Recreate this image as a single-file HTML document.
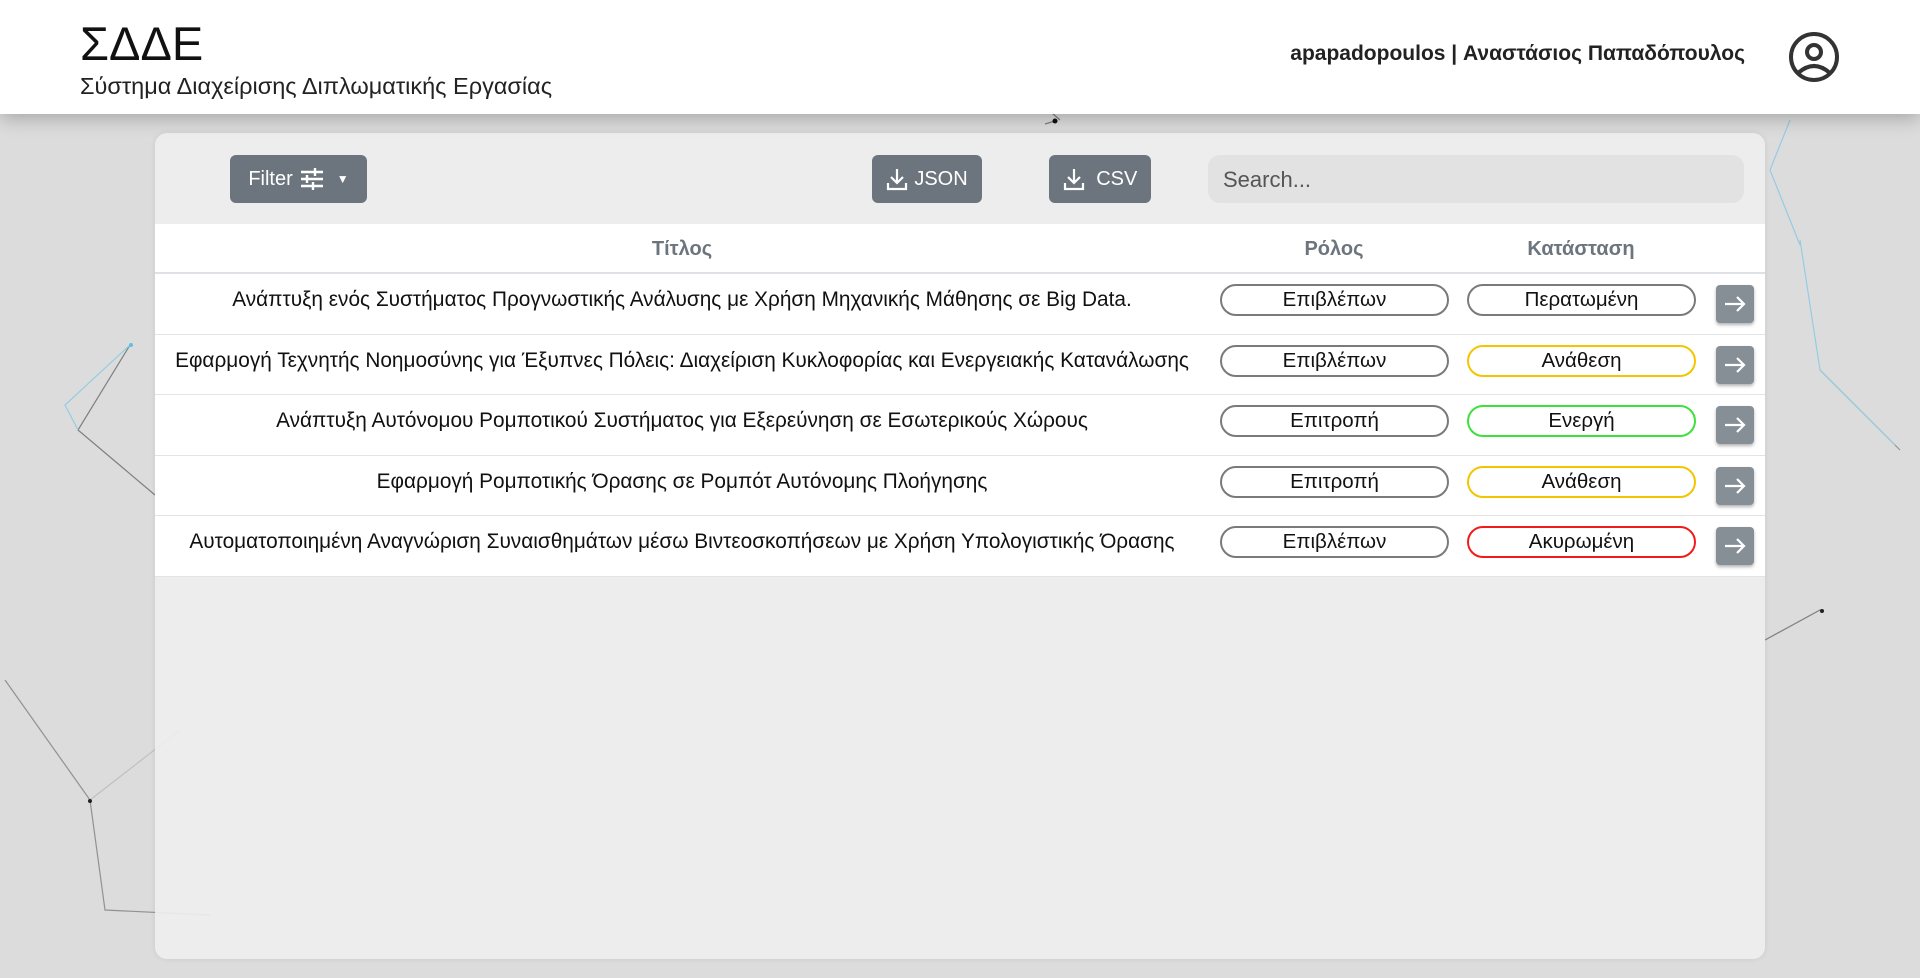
<!DOCTYPE html>
<html><head><meta charset="utf-8">
<style>
*{margin:0;padding:0;box-sizing:border-box}
body{width:1920px;height:978px;overflow:hidden;background:#dcdcdc;font-family:"Liberation Sans","DejaVu Sans",sans-serif;position:relative;color:#111}
.bg{position:absolute;left:0;top:0}
header{position:absolute;left:0;top:0;width:1920px;height:114px;background:#fff;box-shadow:0 4px 18px rgba(0,0,0,.25);z-index:5}
.logo{position:absolute;left:80px;top:16px;font-size:47px;color:#111}
.sub{position:absolute;left:80px;top:73px;font-size:23.5px;color:#222}
.user{position:absolute;right:175px;top:42px;font-size:21px;font-weight:bold;color:#222}
.card{position:absolute;left:155px;top:133px;width:1610px;height:826px;background:rgba(238,238,238,.92);border-radius:12px;overflow:hidden;box-shadow:0 0 6px rgba(0,0,0,.08)}
.btn{position:absolute;top:22px;height:48px;background:#6c757d;border-radius:6px;color:#fff;font-size:20px;display:flex;align-items:center;justify-content:center;gap:6px}
.search{position:absolute;left:1053px;top:22px;width:536px;height:48px;border-radius:12px;background:#e2e2e2;font-size:22px;color:#555;padding:12px 15px}
.table{position:absolute;left:0;top:91px;width:1610px;background:#fff}
.th{height:50px;position:relative;border-bottom:2px solid #dee2e6;font-weight:bold;color:#6c757d;font-size:20px}
.th span{position:absolute;top:14px;transform:translateX(-50%)}
.row{height:60.5px;position:relative;border-bottom:1.5px solid #e4e4e4;font-size:20.8px}
.row .t{position:absolute;left:527px;top:14px;transform:translateX(-50%);white-space:nowrap;color:#111}
.pill{position:absolute;top:10px;height:32px;width:229px;border:2px solid #7a7a7a;border-radius:16px;text-align:center;line-height:28px;font-size:20.5px;color:#111}
.r{left:1065px}.s{left:1312px}
.y{border-color:#f5c400}.g{border-color:#3ee03e}.red{border-color:#f21b1b}
.ar{position:absolute;left:1561px;top:11px;width:38px;height:38px;background:#868e96;border-radius:4px;box-shadow:0 2px 3px rgba(0,0,0,.3);display:flex;align-items:center;justify-content:center}
</style></head><body>
<svg class="bg" width="1920" height="978">
<g stroke="#999" stroke-width="1.2" fill="none" opacity=".55">
<path d="M130 345 L78 430 L155 495" stroke="#333"/>
<path d="M130 345 L65 405 L78 430" stroke="#5bc0eb"/>
<path d="M5 680 L90 800 L105 910 L210 915" stroke="#555"/>
<path d="M90 800 L180 730" stroke="#aaa"/>
<path d="M1820 370 L1900 450" stroke="#555"/>
<path d="M1800 240 L1820 370 L1895 445" stroke="#5bc0eb"/>
<path d="M1765 640 L1820 610 L1822 612" stroke="#333"/>
<path d="M1060 120 L1052 113 M1045 124 L1055 121" stroke="#333"/>
<path d="M1790 120 L1770 170 L1800 245" stroke="#5bc0eb"/>
</g>
<circle cx="131" cy="345" r="2" fill="#5bc0eb"/><circle cx="90" cy="801" r="2" fill="#222"/><circle cx="1822" cy="611" r="2" fill="#222"/><circle cx="1055" cy="121" r="2.5" fill="#111"/>
</svg>
<header>
<div class="logo">ΣΔΔΕ</div>
<div class="sub">Σύστημα Διαχείρισης Διπλωματικής Εργασίας</div>
<div class="user">apapadopoulos | Αναστάσιος Παπαδόπουλος</div>
<svg style="position:absolute;left:1788px;top:31px" width="52" height="52" viewBox="0 0 52 52" fill="none" stroke="#333" stroke-width="4"><circle cx="26" cy="26" r="23"/><circle cx="26" cy="21" r="7"/><path d="M10 42 Q26 28 42 42"/></svg>
</header>
<div class="card">
<div class="btn" style="left:75px;width:137px">Filter
<svg width="26" height="24" viewBox="0 0 26 24" stroke="#fff" stroke-width="2.4"><path d="M2 5H24M2 12H24M2 19H24"/><path d="M16 1V9M8 8V16M14 15V23"/></svg>
<span style="font-size:12px;margin-left:6px">▼</span></div>
<div class="btn" style="left:717px;width:110px"><svg width="22" height="24" viewBox="0 0 22 24" fill="none" stroke="#fff" stroke-width="2.2"><path d="M11 2V15M5 10L11 16L17 10M2 16V22H20V16"/></svg>JSON</div>
<div class="btn" style="left:894px;width:102px"><svg width="22" height="24" viewBox="0 0 22 24" fill="none" stroke="#fff" stroke-width="2.2"><path d="M11 2V15M5 10L11 16L17 10M2 16V22H20V16"/></svg>&nbsp;CSV</div>
<div class="search">Search...</div>
<div class="table">
<div class="th"><span style="left:527px">Τίτλος</span><span style="left:1179px">Ρόλος</span><span style="left:1426px">Κατάσταση</span></div>
<div class="row"><div class="t">Ανάπτυξη ενός Συστήματος Προγνωστικής Ανάλυσης με Χρήση Μηχανικής Μάθησης σε Big Data.</div><div class="pill r">Επιβλέπων</div><div class="pill s">Περατωμένη</div><div class="ar"><svg width="24" height="18" viewBox="0 0 24 18" fill="none" stroke="#fff" stroke-width="2.2"><path d="M2 9H21M14 2L21 9L14 16"/></svg></div></div>
<div class="row"><div class="t">Εφαρμογή Τεχνητής Νοημοσύνης για Έξυπνες Πόλεις: Διαχείριση Κυκλοφορίας και Ενεργειακής Κατανάλωσης</div><div class="pill r">Επιβλέπων</div><div class="pill s y">Ανάθεση</div><div class="ar"><svg width="24" height="18" viewBox="0 0 24 18" fill="none" stroke="#fff" stroke-width="2.2"><path d="M2 9H21M14 2L21 9L14 16"/></svg></div></div>
<div class="row"><div class="t">Ανάπτυξη Αυτόνομου Ρομποτικού Συστήματος για Εξερεύνηση σε Εσωτερικούς Χώρους</div><div class="pill r">Επιτροπή</div><div class="pill s g">Ενεργή</div><div class="ar"><svg width="24" height="18" viewBox="0 0 24 18" fill="none" stroke="#fff" stroke-width="2.2"><path d="M2 9H21M14 2L21 9L14 16"/></svg></div></div>
<div class="row"><div class="t">Εφαρμογή Ρομποτικής Όρασης σε Ρομπότ Αυτόνομης Πλοήγησης</div><div class="pill r">Επιτροπή</div><div class="pill s y">Ανάθεση</div><div class="ar"><svg width="24" height="18" viewBox="0 0 24 18" fill="none" stroke="#fff" stroke-width="2.2"><path d="M2 9H21M14 2L21 9L14 16"/></svg></div></div>
<div class="row"><div class="t">Αυτοματοποιημένη Αναγνώριση Συναισθημάτων μέσω Βιντεοσκοπήσεων με Χρήση Υπολογιστικής Όρασης</div><div class="pill r">Επιβλέπων</div><div class="pill s red">Ακυρωμένη</div><div class="ar"><svg width="24" height="18" viewBox="0 0 24 18" fill="none" stroke="#fff" stroke-width="2.2"><path d="M2 9H21M14 2L21 9L14 16"/></svg></div></div>
</div>
</div>
</body></html>
